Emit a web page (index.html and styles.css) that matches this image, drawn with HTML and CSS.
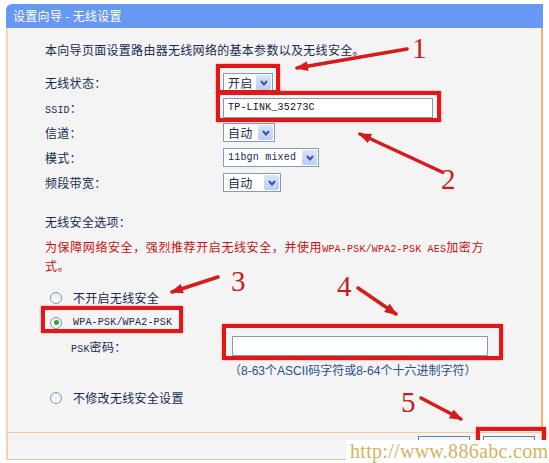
FILE: index.html
```html
<!DOCTYPE html>
<html lang="zh-CN">
<head>
  <meta charset="UTF-8">
  <title>设置向导 - 无线设置</title>
  <link rel="stylesheet" href="styles.css">
</head>
<body>

<div class="page">
  <div class="wizard">
    <div class="wizard-title">设置向导 - 无线设置</div>
    <div class="wizard-main">
      <div class="wizard-body">
        <p class="intro">本向导页面设置路由器无线网络的基本参数以及无线安全。</p>

        <div class="form-row">
          <span class="label">无线状态：</span>
          <span class="select w-on">开启<i class="drop"><svg width="8" height="6" viewBox="0 0 8 6"><polyline points="1,1 4,4.5 7,1" fill="none" stroke="#3f5688" stroke-width="2"/></svg></i></span>
        </div>
        <div class="form-row">
          <span class="label"><span class="en">SSID</span>：</span>
          <span class="text-input ssid"><span class="en">TP-LINK_35273C</span></span>
        </div>
        <div class="form-row">
          <span class="label">信道：</span>
          <span class="select w-auto">自动<i class="drop"><svg width="8" height="6" viewBox="0 0 8 6"><polyline points="1,1 4,4.5 7,1" fill="none" stroke="#3f5688" stroke-width="2"/></svg></i></span>
        </div>
        <div class="form-row">
          <span class="label">模式：</span>
          <span class="select w-mode"><span class="en">11bgn mixed</span><i class="drop"><svg width="8" height="6" viewBox="0 0 8 6"><polyline points="1,1 4,4.5 7,1" fill="none" stroke="#3f5688" stroke-width="2"/></svg></i></span>
        </div>
        <div class="form-row">
          <span class="label">频段带宽：</span>
          <span class="select w-band">自动<i class="drop"><svg width="8" height="6" viewBox="0 0 8 6"><polyline points="1,1 4,4.5 7,1" fill="none" stroke="#3f5688" stroke-width="2"/></svg></i></span>
        </div>

        <p class="sec-title">无线安全选项：</p>
        <p class="warn">为保障网络安全，强烈推荐开启无线安全，并使用<span class="en">WPA-PSK/WPA2-PSK AES</span>加密方式。</p>

        <div class="radio-row first"><span class="radio"></span>不开启无线安全</div>
        <div class="radio-row"><span class="radio on"></span><span class="en">WPA-PSK/WPA2-PSK</span></div>
        <div class="psk-row">
          <span class="label"><span class="en">PSK</span>密码：</span>
          <span class="text-input psk"></span>
        </div>
        <p class="hint">（8-63个ASCII码字符或8-64个十六进制字符）</p>
        <div class="radio-row last"><span class="radio"></span>不修改无线安全设置</div>
      </div>

      <div class="wizard-foot">
        <button class="btn">上一步</button>
        <button class="btn">下一步</button>
      </div>
    </div>
  </div>

  <!-- пометки поверх скриншота -->
  <div class="hl hl-1"></div>
  <div class="hl hl-2"></div>
  <div class="hl hl-3"></div>
  <div class="hl hl-4"></div>
  <div class="hl hl-5"></div>

  <svg class="arrows" width="549" height="463" viewBox="0 0 549 463">
    <defs>
      <marker id="head" markerUnits="userSpaceOnUse" markerWidth="13" markerHeight="10" refX="11" refY="5" orient="auto">
        <path d="M0,0 L13,5 L0,10 Z" fill="#d81a1a"/>
      </marker>
    </defs>
    <g stroke="#d81a1a" stroke-width="3.5" stroke-linecap="round" marker-end="url(#head)">
      <line x1="407" y1="49" x2="297" y2="68"/>
      <line x1="442" y1="172" x2="360" y2="134"/>
      <line x1="218" y1="277" x2="172" y2="292"/>
      <line x1="358" y1="288" x2="396" y2="314"/>
      <line x1="421" y1="398" x2="461" y2="419"/>
    </g>
  </svg>

  <span class="num num-1">1</span>
  <span class="num num-2">2</span>
  <span class="num num-3">3</span>
  <span class="num num-4">4</span>
  <span class="num num-5">5</span>

  <div class="watermark">http://www.886abc.com</div>
</div>

</body>
</html>
```

FILE: styles.css
```css
body {
  margin: 0;
  background: #fff;
  font-family: "Noto Sans CJK SC", sans-serif;
  font-size: 12px;
  letter-spacing: 0.3px;
  color: #182a50;
}
.page {
  position: relative;
  width: 549px;
  height: 463px;
  overflow: hidden;
}
.en {
  font-family: "Liberation Mono", monospace;
  font-size: 10px;
  letter-spacing: 0.2px;
}
.wizard {
  margin: 4px 0 0 6px;
  width: 537px;
}
.wizard-title {
  height: 24px;
  line-height: 24px;
  padding-left: 7px;
  background: #6698f4;
  color: #fff;
  border-radius: 6px 0 0 0;
}
.wizard-main {
  background: #f4f4f4;
  border-left: 2px solid #f3d3b0;
  border-right: 2px solid #efb371;
  border-bottom: 1px solid #e7c8a2;
}
.wizard-body {
  padding: 12px 0 22px 37px;
}
.intro {
  margin: 0 0 10px;
  line-height: 20px;
}
.form-row {
  display: flex;
  align-items: center;
  height: 25px;
}
.form-row .label {
  width: 178px;
}
/* выпадающие списки в стиле XP */
.select {
  display: flex;
  align-items: center;
  box-sizing: border-box;
  height: 19px;
  padding-left: 4px;
  border: 1px solid #7f9db9;
  background: #fff;
  line-height: 17px;
}
.select .drop {
  display: flex;
  align-items: center;
  justify-content: center;
  margin: 0 1px 0 auto;
  width: 15px;
  height: 15px;
  border-radius: 2px;
  background: linear-gradient(#dae5fd, #b9cdf8);
}
.w-on { width: 50px; }
.w-auto { width: 52px; }
.w-mode { width: 96px; }
.w-band { width: 58px; }
.text-input {
  display: flex;
  align-items: center;
  box-sizing: border-box;
  height: 20px;
  padding-left: 4px;
  border: 1px solid #7f9db9;
  background: #fff;
  color: #111;
}
.ssid {
  width: 210px;
}
.sec-title {
  margin: 19px 0 0;
  line-height: 16px;
}
.warn {
  margin: 9px 0 0;
  width: 444px;
  line-height: 16px;
  letter-spacing: 0.6px;
  color: #d01010;
}
.radio-row {
  display: flex;
  align-items: center;
  height: 25px;
  padding-left: 5px;
}
.radio-row.first {
  margin-top: 11px;
}
.radio-row.last {
  margin-top: 6px;
}
.radio {
  display: flex;
  align-items: center;
  justify-content: center;
  box-sizing: border-box;
  width: 12px;
  height: 12px;
  margin-right: 11px;
  border: 1px solid #8496ad;
  border-radius: 50%;
  background: linear-gradient(#e8ecf1, #fff);
}
.radio.on::after {
  content: "";
  width: 5px;
  height: 5px;
  border-radius: 50%;
  background: #35a335;
}
.psk-row {
  display: flex;
  align-items: center;
  height: 22px;
  padding-left: 26px;
}
.psk-row .label {
  width: 161px;
}
.psk {
  width: 256px;
}
.hint {
  margin: 6px 0 0 184px;
  line-height: 16px;
  letter-spacing: 0;
  color: #27508f;
  font-family: "Liberation Sans", "Noto Sans CJK SC", sans-serif;
}
.wizard-foot {
  display: flex;
  justify-content: flex-end;
  gap: 13px;
  box-sizing: border-box;
  height: 27px;
  padding: 3px 6px 0 0;
  border-top: 1px solid #f0c9a0;
}
.btn {
  width: 52px;
  height: 22px;
  padding: 0 0 6px 6px;
  border: 1px solid #5f7bb0;
  background: linear-gradient(#f6f8fd, #d3dcef);
  font: 12px "Noto Sans CJK SC", sans-serif;
  letter-spacing: 6px;
  color: #1c2b4a;
}
/* красные рамки */
.hl {
  position: absolute;
  box-sizing: border-box;
  border: 4px solid #e01818;
  box-shadow: 0 0 2px rgba(230, 30, 30, 0.5);
}
.hl-1 { left: 216px; top: 64px; width: 64px; height: 30px; }
.hl-2 { left: 216px; top: 91px; width: 225px; height: 31px; }
.hl-3 { left: 41px; top: 306px; width: 142px; height: 27px; }
.hl-4 { left: 222px; top: 324px; width: 281px; height: 36px; }
.hl-5 { left: 476px; top: 427px; width: 70px; height: 40px; }
.arrows {
  position: absolute;
  top: 0;
  left: 0;
  pointer-events: none;
}
.num {
  position: absolute;
  font-family: "Liberation Serif", serif;
  font-size: 29px;
  line-height: 29px;
  color: #c81c1c;
}
.num-1 { left: 412px; top: 34px; }
.num-2 { left: 441px; top: 165px; }
.num-3 { left: 231px; top: 267px; }
.num-4 { left: 337px; top: 272px; }
.num-5 { left: 401px; top: 388px; }
.watermark {
  position: absolute;
  left: 346px;
  top: 440px;
  width: 203px;
  height: 23px;
  padding-left: 4px;
  box-sizing: border-box;
  background: #fff;
  font-family: "Liberation Serif", serif;
  font-size: 20px;
  line-height: 23px;
  color: #d6b264;
}
```
